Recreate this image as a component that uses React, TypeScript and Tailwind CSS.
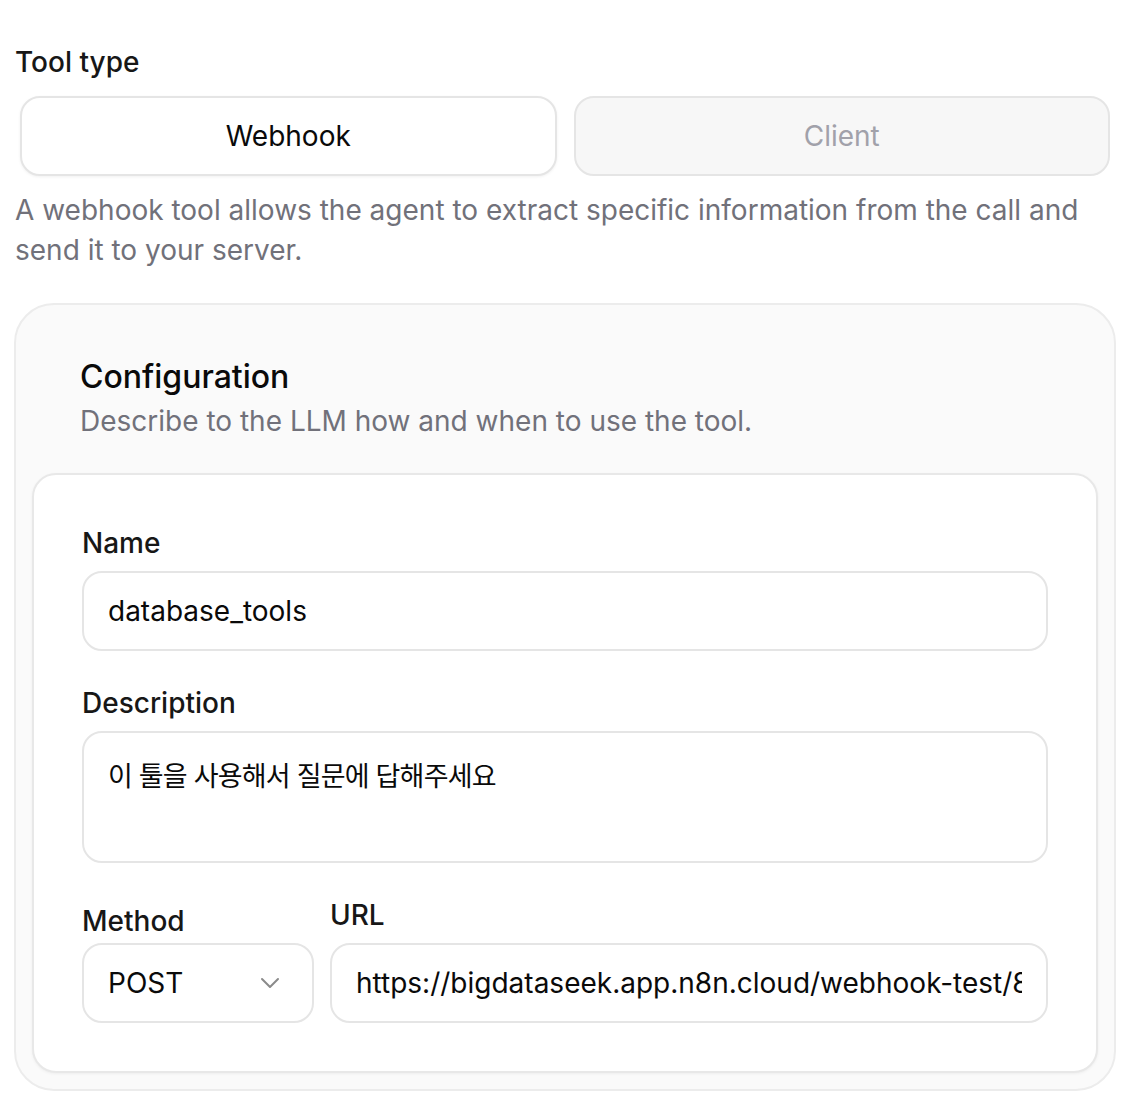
import { ChevronDown } from 'lucide-react';

const font = { fontFamily: 'Inter, "Noto Sans CJK KR", sans-serif' };

function Label({ children, className = '' }: { children: React.ReactNode; className?: string }) {
    return <label className={`block text-[28px] leading-[40px] font-medium text-[#171717] ${className}`}>{children}</label>;
}

export default function App() {
    return (
        <div className="min-h-screen bg-white pl-[14px] pr-[18px] pt-[42px] pb-[4px] text-[#0a0a0a]" style={font}>
            <Label className="pl-[1px]">Tool type</Label>

            <div className="mt-[14px] grid grid-cols-2 gap-[17px] px-[6px]">
                <button className="h-[80px] rounded-[20px] border-2 border-[#e5e5e5] bg-white text-[28px] text-[#0a0a0a] shadow-[0_1px_3px_rgba(0,0,0,0.06)]">
                    Webhook
                </button>
                <button className="h-[80px] rounded-[20px] border-2 border-[#e5e5e5] bg-[#f7f7f7] text-[28px] text-[#a1a1aa]">
                    Client
                </button>
            </div>

            <p className="mt-[14px] pl-[1px] text-[28px] leading-[40px] text-[#71717a]">
                A webhook tool allows the agent to extract specific information from the call and send it to your server.
            </p>

            <div className="mt-[33px] rounded-[40px] border-2 border-[#ececec] bg-[#fafafa] p-[16px]">
                <div className="px-[48px] pt-[32px] pb-[32px]">
                    <h2 className="text-[32px] leading-[48px] font-medium text-[#0a0a0a]">Configuration</h2>
                    <p className="text-[28px] leading-[40px] text-[#71717a]">Describe to the LLM how and when to use the tool.</p>
                </div>

                <div className="rounded-[24px] border-2 border-[#e8e8e8] bg-white p-[48px] shadow-[0_1px_3px_rgba(0,0,0,0.05)]">
                    <Label>Name</Label>
                    <input
                        readOnly
                        value="database_tools"
                        className="mt-[8px] block h-[80px] w-full rounded-[20px] border-2 border-[#e5e5e5] bg-white px-[24px] text-[28px] text-[#0a0a0a] outline-none"
                    />

                    <Label className="mt-[32px]">Description</Label>
                    <div className="mt-[8px] h-[132px] rounded-[20px] border-2 border-[#e5e5e5] bg-white px-[24px] py-[24px] text-[27px] leading-[40px] tracking-[-0.8px] text-[#0a0a0a]">
                        이 툴을 사용해서 질문에 답해주세요
                    </div>

                    <div className="mt-[32px] flex gap-[16px]">
                        <div className="flex w-[232px] shrink-0 flex-col">
                            <Label className="mt-[6px] mb-[2px]">Method</Label>
                            <div className="flex h-[80px] items-center justify-between rounded-[20px] border-2 border-[#e5e5e5] bg-white pl-[24px] pr-[26px] text-[28px] text-[#0a0a0a]">
                                <span>POST</span>
                                <ChevronDown className="h-[32px] w-[32px] text-[#8a8a8a]" strokeWidth={1.5} />
                            </div>
                        </div>
                        <div className="flex min-w-0 flex-1 flex-col">
                            <Label className="mb-[8px]">URL</Label>
                            <input
                                readOnly
                                value="https://bigdataseek.app.n8n.cloud/webhook-test/8f3c2a1e-7b4d-4e9a-9c1f-2d5e6a7b8c9d"
                                className="block h-[80px] w-full rounded-[20px] border-2 border-[#e5e5e5] bg-white px-[24px] text-[28px] text-[#0a0a0a] outline-none"
                            />
                        </div>
                    </div>
                </div>
            </div>
        </div>
    );
}
